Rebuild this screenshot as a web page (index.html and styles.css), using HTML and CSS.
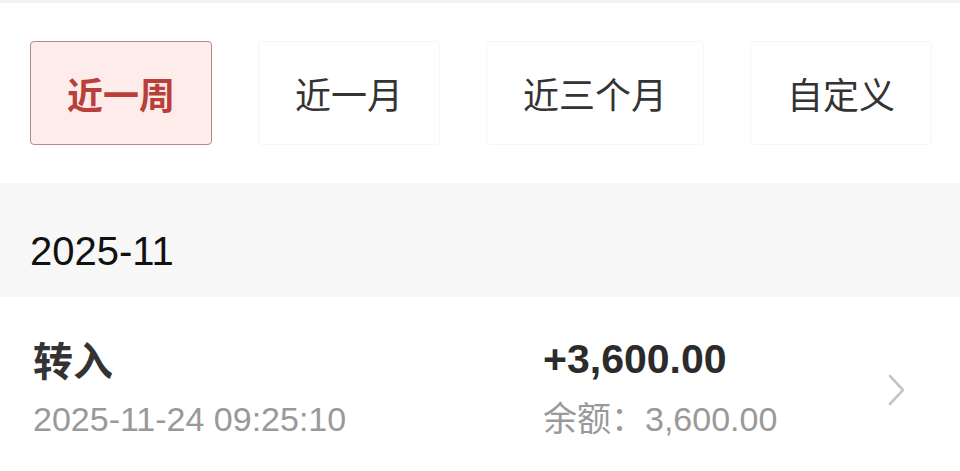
FILE: index.html
```html
<!DOCTYPE html>
<html lang="zh-CN">

<head>
    <meta charset="UTF-8">
    <meta name="viewport" content="width=device-width, initial-scale=1.0">
    <title>交易明细</title>
    <link rel="stylesheet" href="styles.css">
</head>

<body>
    <div class="topbar"></div>

    <!-- 时间筛选 -->
    <div class="tabs">
        <div class="tab active">近一周</div>
        <div class="tab">近一月</div>
        <div class="tab">近三个月</div>
        <div class="tab">自定义</div>
    </div>

    <div class="month">2025-11</div>

    <div class="record">
        <div class="col left">
            <div class="title">转入</div>
            <div class="sub">2025-11-24 09:25:10</div>
        </div>
        <div class="col right">
            <div class="amount">+3,600.00</div>
            <div class="sub">余额：3,600.00</div>
        </div>
        <svg class="chev" width="20" height="32" viewBox="0 0 20 32">
            <path d="M3 2 L16 16 L3 30" fill="none" stroke="#c6c6c6" stroke-width="2.6" stroke-linecap="round" stroke-linejoin="round" />
        </svg>
    </div>
</body>

</html>
```

FILE: styles.css
```css
body {
    margin: 0;
    font-family: "Liberation Sans", Arial, "Noto Sans CJK SC", sans-serif;
    background: #fff;
    color: #333;
}

.topbar {
    height: 3px;
    background: #f2f2f2;
}

.tabs {
    display: flex;
    gap: 46px;
    padding: 38px 30px;
}

.tab {
    flex-shrink: 0;
    height: 104px;
    box-sizing: border-box;
    padding: 0 36px;
    display: flex;
    align-items: center;
    justify-content: center;
    white-space: nowrap;
    font-family: "Noto Sans CJK SC", sans-serif;
    font-size: 36px;
    color: #333;
    border: 1px solid #f6f6f6;
    border-radius: 4px;
}

.tab.active {
    background: #fdecea;
    border-color: #b48a87;
    color: #b9403a;
    font-weight: bold;
}

.month {
    height: 114px;
    box-sizing: border-box;
    padding: 48px 0 0 30px;
    background: #f7f7f7;
    font-size: 40px;
    line-height: 1;
    color: #111;
}

.record {
    display: flex;
    align-items: center;
    padding: 34px 53px 0 33px;
}

.col.left {
    width: 510px;
}

.col.right {
    flex: 1;
}

.title {
    font-family: "Noto Sans CJK SC", sans-serif;
    font-size: 40px;
    font-weight: bold;
    line-height: 56px;
    color: #333;
}

.amount {
    font-size: 41px;
    font-weight: bold;
    line-height: 56px;
    color: #2b2b2b;
}

.sub {
    margin-top: 7px;
    font-size: 34px;
    line-height: 50px;
    color: #999;
}

.chev {
    display: block;
    margin-top: 4px;
}
```
